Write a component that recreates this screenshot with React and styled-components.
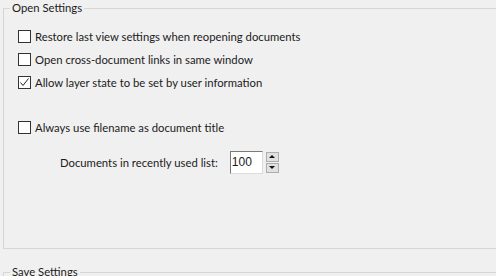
import React, { useState } from "react";
import styled, { createGlobalStyle } from "styled-components";

const Global = createGlobalStyle`
  html, body {
    margin: 0;
    padding: 0;
    background: #f0f0f0;
    overflow: hidden;
  }
  body {
    font-family: "Lato", "Noto Sans", sans-serif;
    font-size: 11.3px;
    color: #1b1b1b;
  }
`;

const Page = styled.div`
  width: 496px;
  height: 276px;
  overflow: hidden;
  padding-left: 3px;
  box-sizing: border-box;
`;

const Group = styled.fieldset`
  margin: ${(p) => p.top || 0}px -40px 0 0;
  padding: 0 0 0 6px;
  border: 1px solid #d6d6d6;
  height: ${(p) => (p.height ? `${p.height}px` : "auto")};
  box-sizing: border-box;
`;

const Legend = styled.legend`
  padding: 0 2px;
  line-height: 16px;
  font-size: 11.3px;
  color: #1b1b1b;
`;

const Body = styled.div`
  padding: 9px 0 0 8px;
  display: flex;
  flex-direction: column;
`;

const Row = styled.label`
  display: flex;
  align-items: center;
  height: 23px;
  gap: 4px;
  margin-top: ${(p) => p.gap || 0}px;
  cursor: default;
`;

const Box = styled.span`
  width: 11px;
  height: 11px;
  border: 1px solid #333;
  background: #fff;
  display: flex;
  align-items: center;
  justify-content: center;
`;

const CountRow = styled.div`
  display: flex;
  align-items: center;
  padding-left: 42px;
  margin-top: 11px;
  height: 24px;
`;

const CountLabel = styled.span`
  margin-right: 12px;
`;

const Field = styled.input`
  width: 33px;
  height: 23px;
  box-sizing: border-box;
  border: 1px solid #dcdcdc;
  border-top-color: #7a7a7a;
  border-left-color: #7a7a7a;
  background: #fff;
  font-family: "Liberation Sans", sans-serif;
  font-size: 12px;
  padding: 0 1px;
  color: #1b1b1b;
  outline: none;
`;

const Spinner = styled.div`
  display: flex;
  flex-direction: column;
  gap: 1px;
  margin-left: 3px;
`;

const SpinButton = styled.button`
  width: 13px;
  height: 10px;
  padding: 0;
  border: 1px solid #adadad;
  background: #e1e1e1;
  display: flex;
  align-items: center;
  justify-content: center;
`;

const Arrow = styled.span`
  width: 0;
  height: 0;
  border-left: 3px solid transparent;
  border-right: 3px solid transparent;
  ${(p) =>
    p.up ? "border-bottom: 3px solid #111;" : "border-top: 3px solid #111;"}
`;

const Check = () => (
  <svg width="11" height="11" viewBox="0 0 11 11">
    <polyline
      points="1.5,5.5 4,8.5 9.5,1.5"
      fill="none"
      stroke="#222"
      strokeWidth="1"
    />
  </svg>
);

const Option = ({ label, checked, onToggle, gap }) => (
  <Row gap={gap} onClick={onToggle}>
    <Box>{checked && <Check />}</Box>
    {label}
  </Row>
);

export default function App() {
  const [opts, setOpts] = useState({
    restore: false,
    crossDoc: false,
    layer: true,
    filename: false,
  });
  const [count, setCount] = useState(100);
  const toggle = (k) => () => setOpts((o) => ({ ...o, [k]: !o[k] }));

  return (
    <Page>
      <Global />
      <Group height={249}>
        <Legend>Open Settings</Legend>
        <Body>
          <Option
            label="Restore last view settings when reopening documents"
            checked={opts.restore}
            onToggle={toggle("restore")}
          />
          <Option
            label="Open cross-document links in same window"
            checked={opts.crossDoc}
            onToggle={toggle("crossDoc")}
          />
          <Option
            label="Allow layer state to be set by user information"
            checked={opts.layer}
            onToggle={toggle("layer")}
          />
          <Option
            gap={22}
            label="Always use filename as document title"
            checked={opts.filename}
            onToggle={toggle("filename")}
          />
          <CountRow>
            <CountLabel>Documents in recently used list:</CountLabel>
            <Field
              value={count}
              onChange={(e) => setCount(e.target.value)}
            />
            <Spinner>
              <SpinButton onClick={() => setCount((c) => Number(c) + 1)}>
                <Arrow up />
              </SpinButton>
              <SpinButton onClick={() => setCount((c) => Number(c) - 1)}>
                <Arrow />
              </SpinButton>
            </Spinner>
          </CountRow>
        </Body>
      </Group>
      <Group top={15}>
        <Legend>Save Settings</Legend>
      </Group>
    </Page>
  );
}
